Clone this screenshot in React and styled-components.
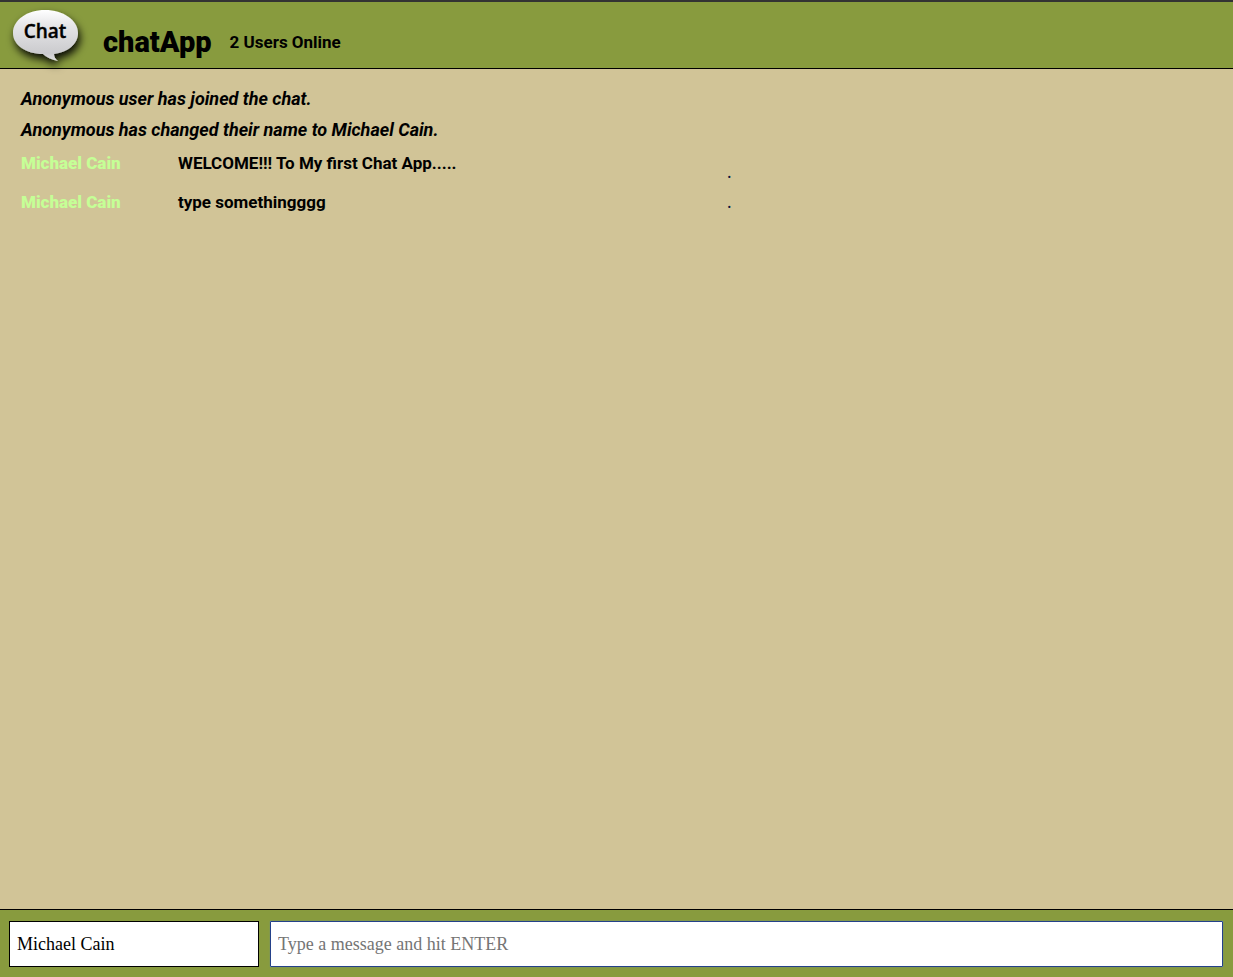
import React from "react";
import styled, { createGlobalStyle } from "styled-components";

const GlobalStyle = createGlobalStyle`
  *, *::before, *::after { box-sizing: border-box; }
  body {
    margin: 0;
    background: #d1c497;
    color: #000;
    font-family: Roboto, "Liberation Sans", sans-serif;
  }
`;

const Page = styled.div`
  display: flex;
  flex-direction: column;
  min-height: 100vh;
`;

const Header = styled.header`
  display: flex;
  align-items: flex-start;
  height: 69px;
  border-top: 2px solid #333;
  border-bottom: 1px solid #000;
  background: #889b3e;
`;

const Logo = styled.svg`
  flex: none;
  display: block;
  width: 92px;
  height: 76px;
  overflow: visible;
`;

const Title = styled.h1`
  margin: 22px 18px 0 11px;
  font-size: 29px;
  line-height: 36px;
  font-weight: 900;
`;

const UserCount = styled.p`
  margin: 28px 0 0;
  font-size: 17px;
  line-height: 24px;
  font-weight: 700;
`;

const Chat = styled.main`
  flex: 1;
  display: grid;
  grid-template-columns: 58fr 42fr;
  padding: 18px 0 20px 21px;
`;

const Log = styled.section`
  min-width: 0;
`;

const Notice = styled.p`
  margin: 0 0 7px;
  font-size: 18px;
  line-height: 24px;
  font-weight: 700;
  font-style: italic;
`;

const Message = styled.article`
  display: grid;
  grid-template-columns: 157px 1fr;
  padding: 2px 0 13px;
  font-size: 17px;
  line-height: 24px;
  font-weight: 700;
`;

const Author = styled.span`
  color: #c5ff96;
  font-weight: 900;
`;

const Markers = styled.div`
  padding: 70px 0 0 3px;
  color: #081440;
  font-family: "Liberation Serif", serif;
  font-size: 18px;
  line-height: 30px;
`;

const Marker = styled.div`
  height: 30px;
`;

const Footer = styled.form`
  display: flex;
  gap: 11px;
  padding: 11px 10px 10px 9px;
  border-top: 1px solid #000;
  background: #889b3e;
`;

const Field = styled.input`
  flex: ${(p) => (p.$wide ? "1" : "0 0 250px")};
  min-width: 0;
  height: 46px;
  padding: 0 7px;
  border: 1px solid ${(p) => (p.$wide ? "#24418a" : "#000")};
  border-radius: ${(p) => (p.$wide ? "1px" : "0")};
  box-shadow: ${(p) => (p.$wide ? "0 0 1px #4f87dd" : "none")};
  outline: none;
  background: #fff;
  color: #000;
  font-family: "Liberation Serif", serif;
  font-size: 18px;
  &::placeholder { color: #757575; opacity: 1; }
`;

function ChatLogo() {
  return (
    <Logo viewBox="0 0 92 76" role="img" aria-label="Chat">
      <defs>
        <linearGradient id="bubble" x1="0" y1="0" x2="0" y2="1">
          <stop offset="0" stopColor="#ffffff" />
          <stop offset="0.3" stopColor="#e6e6e8" />
          <stop offset="0.85" stopColor="#cbcbce" />
          <stop offset="1" stopColor="#e0e0e2" />
        </linearGradient>
        <filter id="shade" x="-30%" y="-30%" width="160%" height="170%">
          <feDropShadow dx="2" dy="5" stdDeviation="4" floodColor="#000" floodOpacity="0.95" />
        </filter>
      </defs>
      <path
        filter="url(#shade)"
        fill="url(#bubble)"
        d="M45 8C63 8 78 18 78 31C78 42 68 50 54 52Q54 56 58 59Q48 57 43 52C26 52 13 43 13 31C13 18 27 8 45 8Z"
      />
      <text x="45" y="36" textAnchor="middle" fontFamily="Open Sans, sans-serif" fontSize="19" fontWeight="600" stroke="#000" strokeWidth="0.4">Chat</text>
    </Logo>
  );
}

const notices = [
  "Anonymous user has joined the chat.",
  "Anonymous has changed their name to Michael Cain.",
];

const messages = [
  { author: "Michael Cain", text: "WELCOME!!! To My first Chat App....." },
  { author: "Michael Cain", text: "type somethingggg" },
];

export default function App() {
  return (
    <Page>
      <GlobalStyle />
      <Header>
        <ChatLogo />
        <Title>chatApp</Title>
        <UserCount>2 Users Online</UserCount>
      </Header>
      <Chat>
        <Log>
          {notices.map((n) => <Notice key={n}>{n}</Notice>)}
          {messages.map((m) => (
            <Message key={m.text}>
              <Author>{m.author}</Author>
              <span>{m.text}</span>
            </Message>
          ))}
        </Log>
        <Markers>
          {messages.map((m) => <Marker key={m.text}>.</Marker>)}
        </Markers>
      </Chat>
      <Footer onSubmit={(e) => e.preventDefault()}>
        <Field aria-label="Your name" defaultValue="Michael Cain" />
        <Field $wide aria-label="Message" placeholder="Type a message and hit ENTER" />
      </Footer>
    </Page>
  );
}
